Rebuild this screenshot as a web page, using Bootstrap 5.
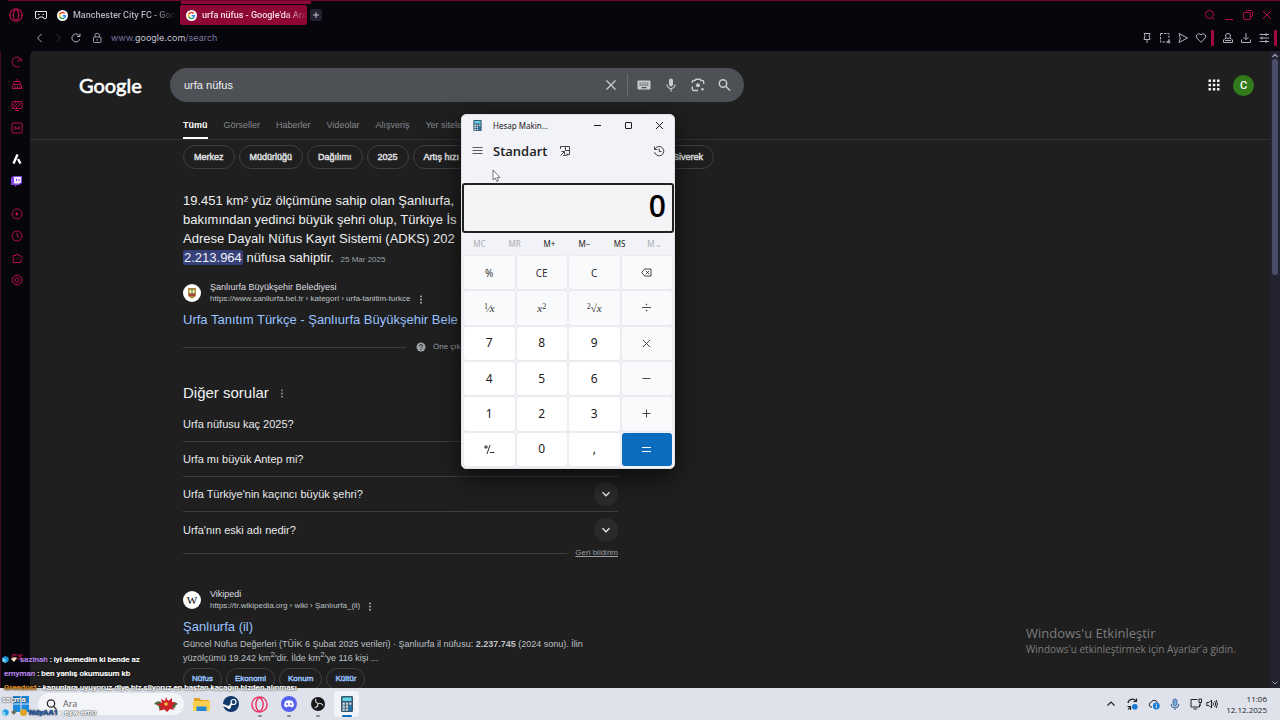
<!DOCTYPE html>
<html lang="tr" data-bs-theme="dark">
<head>
<meta charset="utf-8">
<meta name="viewport" content="width=device-width, initial-scale=1">
<title>urfa nüfus - Google'da Ara</title>
<link href="https://cdn.jsdelivr.net/npm/bootstrap@5.3.0/dist/css/bootstrap.min.css" rel="stylesheet">
<style>
  :root { --gx: #b50f45; --page: #1f1f1f; --rule: #3c3d3f; --link: #99c3ff; --soft: #9aa0a6; }
  body { font-family: "Liberation Sans", Arial, sans-serif; font-size: 9px; line-height: 12px; background: #06060c; color: #e8e8e8; }
  svg { display: block; flex: none; }
  .ln { fill: none; stroke: currentColor; }
  button, input { font: inherit; color: inherit; }
  button { background: none; border: 0; padding: 0; }
  a { color: inherit; text-decoration: none; }

  /* browser chrome */
  .desk { height: 100vh; }
  .topline { height: 5px; border-top: 1px solid #6b0629; margin-left: 8px; }
  .topline div { height: 3px; width: 130px; margin-left: 173px; background: #8e0636; }
  .chrome { font-family: Inter, sans-serif; }
  .tabrow { height: 20px; padding: 0 7px 0 9px; }
  .tab { height: 20px; width: 129px; padding: 0 4px 0 6px; color: #b4b2bd; gap: 5px; }
  .tab span { font: 500 9px/12px Roboto, sans-serif; white-space: nowrap; -webkit-mask-image: linear-gradient(90deg, #000 78%, transparent); mask-image: linear-gradient(90deg, #000 78%, transparent); }
  .tab.on { background: #8e0636; color: #f3dfe6; border-radius: 2px; width: 127px; }
  .plus { width: 12px; height: 12px; background: #24202f; border-radius: 2px; color: #c4c0d0; margin-left: 3px; }
  .gx { color: var(--gx); }
  .addr { height: 26px; padding: 0 3px 1px 35px; color: #b0afbb; }
  .url { font-size: 9px; color: #7d749f; }
  .url b { font-weight: 400; color: #c3c0d0; }
  .pipe { width: 3px; height: 16px; background: #a00a40; border-radius: 1px; }
  .side { width: 30px; color: #b50f45; border-left: 1px solid #3d0a1e; }
  .side div { padding-left: 1px; }
  .side button { height: 22px; width: 29px; display: flex; align-items: center; justify-content: center; }

  /* results page */
  .view { background: var(--page); border-top-left-radius: 5px; }
  .bar { height: 68px; padding: 0 16px 0 49px; }
  .glogo { font-family: Lato, sans-serif; font-weight: 400; font-size: 20px; line-height: 26px; color: #fff; width: 91px; -webkit-text-stroke: .6px #fff; }
  .box { width: 574px; height: 34px; border-radius: 17px; background: #4d5156; padding: 0 13px 0 14px; color: #c9cbce; }
  .box input { background: none; border: 0; outline: 0; padding: 0; font-size: 11px; color: #f0f0f0; }
  .box i { width: 1px; height: 22px; background: #6a6e73; margin: 0 9px 0 10px; }
  .face { width: 21px; height: 21px; background: #337a1c; font: 500 11px/21px Roboto, sans-serif; color: #fff; margin-left: 13px; }
  .tabs { height: 21px; padding-left: 153px; gap: 16px; border-bottom: 1px solid #303134; color: #85888c; }
  .tabs a { height: 20px; line-height: 12px; }
  .tabs a.on { color: #fff; font-weight: 700; border-bottom: 2px solid #fff; }
  .col-res { padding-left: 153px; width: 684px; }
  .chip { height: 24px; border: 1px solid #3c4043; border-radius: 12px; padding: 0 10px; line-height: 22px; -webkit-text-stroke: .4px; white-space: nowrap; color: #e3e4e6; }
  .chips { gap: 4px; margin-top: 5px; }
  .answer { font-size: 13px; line-height: 19px; margin: 22px 0 0; white-space: nowrap; color: #eef0f2; }
  .answer em { font-style: normal; background: #36407a; border-radius: 2px; padding: 0 1px; }
  .answer small { font-size: 8px; color: var(--soft); margin-left: 3px; }
  .src { height: 24px; gap: 9px; white-space: nowrap; color: #dcdde0; }
  .fav { width: 18px; height: 18px; background: #fff; }
  .src p { margin: 0; line-height: 12px; }
  .src .path { font-size: 8px; color: #bdc1c6; }
  .ttl { font-size: 13px; line-height: 18px; color: var(--link); white-space: nowrap; margin-top: 6px; }
  .rule { height: 1px; background: var(--rule); }
  .tiny { font-size: 8px; color: var(--soft); white-space: nowrap; }
  .inner { width: 435px; }
  .ask { height: 35px; font-size: 11px; border-bottom: 1px solid var(--rule); width: 100%; color: #e8e9eb; }
  .ask:last-of-type { border: 0; }
  .dd { width: 24px; height: 24px; background: #282a2b; }
  .snip { line-height: 14px; color: #bdc1c6; margin: 1px 0 0; white-space: nowrap; }
  .snip sup { font-size: 8px; line-height: 0; }
  .blue { margin-top: 3px; }
  .blue .chip { color: var(--link); font-size: 8px; height: 22px; line-height: 20px; padding: 0 8px; }
  .sb { width: 10px; background: #23232f; padding: 2px; color: #9c9eb8; }
  .sb div { width: 6px; height: 216px; background: #4a4d68; border-radius: 3px; }

  /* calculator */
  .calc { left: 461px; top: 114px; width: 214px; height: 355px; background: #f2f3f8; border: 1px solid #dfe1e5; border-radius: 5px; color: #1b1b1b; font-family: "Noto Sans", sans-serif; box-shadow: 0 8px 26px rgba(0,0,0,.65); overflow: hidden; }
  .ctitle { height: 21px; padding: 0 10px 0 11px; font-size: 8px; }
  .chead { height: 47px; padding: 5px 9px 0 10px; color: #333; }
  .chead h1 { font: 600 13px/20px "Open Sans", sans-serif; margin: 0; color: #1b1b1b; }
  .disp { height: 50px; border: 2px solid #222; border-radius: 3px; padding: 0 6px; background: #f4f3f6; }
  .disp output { font: 600 30px/41px "Open Sans", sans-serif; color: #000; }
  .mem { height: 22px; font-size: 8px; padding-right: 2px; }
  .mem button { flex: 1 1 0; }
  .mem button:disabled { color: #a9abb0; }
  .keys { display: grid; grid-template-columns: repeat(4, 1fr); grid-auto-rows: 1fr; gap: 2px; padding: 1px 2px 2px; }
  .keys button { background: #fff; border-radius: 3px; box-shadow: 0 0 0 1px #ebecf0, 0 1px 1px #c9cbd0; font-size: 12px; display: flex; align-items: center; justify-content: center; }
  .keys .fn { background: #f9fafc; font-size: 10px; color: #333; }
  .keys .eq { background: #0b6cbd; color: #fff; box-shadow: none; }
  .keys .math { font-family: "Liberation Serif", serif; font-style: italic; font-size: 11px; }
  .math sup { font-size: 8px; font-style: normal; top: -3px; }
  .ptr { left: 492px; top: 169px; }

  /* desktop */
  .mark-win { left: 1026px; top: 625px; font-family: "Open Sans", sans-serif; color: #7d7d7d; }
  .mark-win p { margin: 0; font-size: 13px; line-height: 17px; }
  .mark-win p + p { font-size: 10px; line-height: 14px; }
  .task { height: 32px; background: #dfe2ea; color: #222; padding-left: 12px; font-family: "Noto Sans", sans-serif; }
  .find { width: 146px; height: 22px; border-radius: 11px; background: #f4f5f9; padding: 0 6px 0 8px; margin-left: 8px; }
  .find input { width: 70px; background: none; border: 0; padding: 0; font-size: 9px; color: #666; margin-left: 6px; }
  .app { width: 25px; height: 26px; position: relative; display: flex; align-items: center; justify-content: center; border-radius: 3px; }
  .run::after { content: ""; position: absolute; bottom: 0; width: 4px; height: 2px; border-radius: 1px; background: #858890; }
  .app.act { background: #f1f3f8; }
  .app.act::after { width: 10px; background: #0b6cbd; }
  .tray { padding-right: 13px; }
  .clock { font: 8px/11px "Open Sans", sans-serif; width: 44px; margin-left: 5px; }

  /* stream chat laid over the lower left corner */
  .chat { left: 2px; top: 653px; font: 500 8px/14px Roboto, sans-serif; color: #fff; white-space: nowrap; -webkit-text-stroke: .2px; text-shadow: 0 0 2px #000, 0 0 1px #000; pointer-events: none; }
  .chat p { margin: 0; }
  .chat svg { display: inline-block; vertical-align: -1px; }
  .gxbadge { left: 11px; top: 652px; font: 700 8px/10px Inter, sans-serif; color: var(--gx); }
</style>
</head>
<body class="overflow-hidden">
<svg width="0" height="0" class="position-absolute">
  <symbol id="g" viewBox="0 0 12 12"><circle cx="6" cy="6" r="6" fill="#fff"/><g fill="none" stroke-width="1.7"><path d="M8.4 3.8A3.3 3.3 0 0 0 3.1 4.4" stroke="#ea4335"/><path d="M3.1 4.4a3.3 3.3 0 0 0 0 3.2" stroke="#fbbc05"/><path d="M3.1 7.6a3.3 3.3 0 0 0 5 .9" stroke="#34a853"/><path d="M8.1 8.5A3.1 3.1 0 0 0 9.2 6.2H6.1" stroke="#4285f4"/></g></symbol>
  <symbol id="dots" viewBox="0 0 4 10"><g fill="currentColor"><circle cx="2" cy="1.5" r="1"/><circle cx="2" cy="5" r="1"/><circle cx="2" cy="8.5" r="1"/></g></symbol>
  <symbol id="down" viewBox="0 0 10 10"><path d="M1.5 3.3 5 6.8l3.500-3.500" fill="none" stroke="currentColor" stroke-width="1.3"/></symbol>
  <symbol id="calcapp" viewBox="0 0 12 16"><rect width="12" height="16" rx="1.200" fill="#38566b"/><rect x="1.500" y="1.500" width="9" height="3.500" fill="#5fd6e8"/><g fill="#c8dbe6"><path d="M1.500 6.500h2.300v2.200H1.500zM4.800 6.500h2.300v2.200H4.800zM8.200 6.500h2.300v2.200H8.200zM1.500 9.600h2.300v2.200H1.500zM4.800 9.600h2.300v2.200H4.800zM1.500 12.600h2.300v2.200H1.500zM4.800 12.600h2.300v2.200H4.800z"/></g><path d="M8.200 9.600h2.300v5.200H8.200z" fill="#1b7fc4"/></symbol>
  <symbol id="cube" viewBox="0 0 8 8"><path d="m4 0 3.500 2v4L4 8 .5 6V2z" fill="#1f9be0"/><path d="M4 4v4L.5 6V2z" fill="#7fd4f7"/></symbol>
</svg>

<div class="desk d-flex flex-column">
  <header class="chrome">
    <div class="topline"><div></div></div>
    <div class="tabrow d-flex align-items-center">
      <button class="gx" aria-label="Opera GX"><svg width="14" height="14" viewBox="0 0 14 14" class="ln" stroke-width="1.300"><circle cx="7" cy="7" r="6.200"/><ellipse cx="7" cy="7" rx="2.700" ry="5.200"/></svg></button>
      <button class="ps-2 ms-1 me-1" aria-label="Çalışma alanı"><svg width="12" height="12" viewBox="0 0 12 12" class="ln" stroke="#a9a8b4"><path d="M.5 2.500h11v6.500L9.500 10 8 8H4.500L3 10 .5 9zM3 5.500h1.500M7.500 5.500H9"/></svg></button>
      <a class="tab d-flex align-items-center" href="#"><svg width="11" height="11"><use href="#g"/></svg><span>Manchester City FC - Goo</span></a>
      <a class="tab on d-flex align-items-center" href="#"><svg width="11" height="11"><use href="#g"/></svg><span>urfa nüfus - Google'da Ara</span></a>
      <button class="plus d-flex align-items-center justify-content-center" aria-label="Yeni sekme"><svg width="8" height="8" viewBox="0 0 8 8" class="ln"><path d="M4 1v6M1 4h6"/></svg></button>
      <div class="ms-auto d-flex gx" style="gap:7px">
        <svg width="12" height="12" viewBox="0 0 12 12" class="ln"><circle cx="5.500" cy="5.500" r="4"/><path d="m8.500 8.500 2 2"/></svg>
        <svg width="12" height="12" viewBox="0 0 12 12" class="ln"><path d="M2 10.500h8"/></svg>
        <svg width="12" height="12" viewBox="0 0 12 12" class="ln"><rect x="1.500" y="3.500" width="7" height="7" rx="1.500"/><path d="M3.500 3.500V3L5 1.500h4.500l1 1V7L9 8.500"/></svg>
        <svg width="12" height="12" viewBox="0 0 12 12" class="ln"><path d="m2 2 8 8M10 2l-8 8"/></svg>
      </div>
    </div>
    <div class="addr d-flex align-items-center">
      <svg width="10" height="10" viewBox="0 0 10 10" class="ln"><path d="M6.500 1 2.500 5l4 4"/></svg>
      <svg width="10" height="10" viewBox="0 0 10 10" class="ln ms-2 opacity-25"><path d="m3.500 1 4 4-4 4"/></svg>
      <svg width="10" height="10" viewBox="0 0 10 10" class="ln ms-2"><path d="M8.700 6.200A4 4 0 1 1 8.400 3M9 .5v3H6"/></svg>
      <svg width="10" height="10" viewBox="0 0 10 10" class="ln" stroke-width=".9" style="margin:0 9px 0 11px"><rect x="1.500" y="4" width="7.500" height="5.500" rx="1"/><path d="M3 4V2.500a2.200 2.200 0 0 1 4.500 0V4M5.200 6v1.800"/></svg>
      <a class="url" href="#">www.<b>google.com</b>/search</a>
      <div class="ms-auto d-flex align-items-center" style="gap:6px">
        <svg width="12" height="12" viewBox="0 0 12 12" class="ln"><path d="M3 1.500h6L8 3.500l1 4H3l1-4zM6 7.500v3.500"/></svg>
        <svg width="12" height="12" viewBox="0 0 12 12" class="ln"><path d="M1.500 1.500h8.500v8.500H1.500z" stroke-dasharray="2.500 1"/><path d="M8 10h3.500M10 8v3.500"/></svg>
        <svg width="12" height="12" viewBox="0 0 12 12" class="ln"><path d="m2 1.500 8.500 4.500L2 10.500 3.200 6z"/></svg>
        <svg width="12" height="12" viewBox="0 0 12 12" class="ln"><path d="M6 10.300 1.800 6A2.600 2.600 0 0 1 6 2.900 2.600 2.600 0 0 1 10.200 6z"/></svg>
      </div>
      <div class="d-flex align-items-center" style="gap:6px;margin-left:4px"><span class="pipe"></span>
        <svg style="margin-left:2px" width="12" height="12" viewBox="0 0 12 12" class="ln"><circle cx="6" cy="4" r="2.500"/><path d="M4 6.500H3L1.500 8v2.500h9V8L9 6.500H8M3 8.500h6"/></svg>
        <svg width="12" height="12" viewBox="0 0 12 12" class="ln"><path d="M6 1v6.500M3.500 5.200 6 7.700l2.500-2.500M1.500 7.500v3h9v-3"/></svg>
        <svg width="12" height="12" viewBox="0 0 12 12" class="ln"><path d="M1.500 2.500H11M1.500 6H11M1.500 9.500H11M8 1v3M4 4.500v3M8 8v3"/></svg>
      </div>
      <span class="pipe ms-1"></span>
    </div>
  </header>

  <div class="d-flex flex-grow-1 overflow-hidden">
    <nav class="side flex-shrink-0">
      <div>
      <button aria-label="GX Control"><svg width="12" height="12" viewBox="0 0 12 12" class="ln"><path d="M8.700 10.300A5 5 0 1 1 8.500 1.700M6 6l4-3M7.500 3h3v2.500"/></svg></button>
      <button aria-label="GX Cleaner"><svg width="12" height="12" viewBox="0 0 12 12" class="ln"><path d="M6 1v2.500M3 3.500h6v3H3zM2 6.500h8l1 4H1zM4 8v2.500M6.500 8v2.500M9 8v2.500"/></svg></button>
      <button aria-label="Mods"><svg width="12" height="12" viewBox="0 0 12 12" class="ln"><rect x="1" y="1.500" width="10" height="7" rx="1"/><path d="M2 8 8 2M5 8l5-5M2 5l3-3M4 10.500h4"/></svg></button>
      <button aria-label="GX Corner"><svg width="12" height="12" viewBox="0 0 12 12" class="ln"><rect x="1" y="1" width="10" height="10" rx="1"/><path d="M4 8V4.500L6 7l2-2.500V8"/></svg></button>
      </div>
      <div style="padding-top:9px">
      <button aria-label="Aria"><svg width="10" height="10" viewBox="0 0 10 10" fill="none" stroke="#fff" stroke-width="2.400"><path d="M5.500.5 1.500 9.500M6 5l2.500 4.500"/></svg></button>
      <button aria-label="Twitch"><svg width="11" height="11" viewBox="0 0 11 11"><path d="M2 0h9v7L8 9H6l-2 2V9H0V2z" fill="#8146e0"/><path d="M3 1h7v5L8.500 7.500H3z" fill="#f4eaff"/><path d="M5.500 2.800v2.400M8 2.800v2.400" stroke="#8146e0" stroke-width="1"/></svg></button>
      </div>
      <div style="padding-top:11px">
      <button aria-label="Oynatıcı"><svg width="12" height="12" viewBox="0 0 12 12" class="ln"><circle cx="6" cy="6" r="5"/><path d="M5.200 4.500v3l2-1.500z" fill="currentColor"/></svg></button>
      <button aria-label="Geçmiş"><svg width="12" height="12" viewBox="0 0 12 12" class="ln"><circle cx="6" cy="6" r="5"/><path d="M6 2.800V6l2.200 1.200"/></svg></button>
      <button aria-label="Uzantılar"><svg width="12" height="12" viewBox="0 0 12 12" class="ln"><path d="M2 3.500h2.500a1.500 1.500 0 1 1 3 0L10 4l.5 1.500 1 1-1 1-1 3H2V8l1.300-1L2 5.800z"/></svg></button>
      <button aria-label="Ayarlar"><svg width="12" height="12" viewBox="0 0 12 12" class="ln"><path d="m4 1.300 2 .2 2-.2 1 1.600 1.800 1.200L10.500 6l.3 2L9 9.100l-1 1.600-2-.2-2 .2-1-1.600L1.200 8l.3-2-.3-2L3 2.900z"/><circle cx="6" cy="6" r="2.100"/></svg></button>
      </div>
    </nav>

    <main class="view flex-grow-1 overflow-hidden">
      <div class="bar d-flex align-items-center">
        <a class="glogo" href="#">Google</a>
        <form class="box d-flex align-items-center">
          <input class="flex-grow-1" type="text" value="urfa nüfus" aria-label="Ara">
          <svg class="ln" width="12" height="12" viewBox="0 0 12 12" stroke-width="1.300"><path d="m1.500 1.500 9 9M10.500 1.500l-9 9"/></svg>
          <i></i>
          <svg width="14" height="14" viewBox="0 0 14 14" fill="currentColor"><path d="M1.500 2.500h11q1 0 1 1v7q0 1-1 1h-11q-1 0-1-1v-7q0-1 1-1z"/><path d="M2.500 5h9M2.500 7.200h9" stroke="#4d5156" stroke-width="1.200" stroke-dasharray="1.200 .7"/><path d="M4.500 9.600h5" stroke="#4d5156" stroke-width="1.100"/></svg>
          <svg style="margin-left:13px" width="14" height="14" viewBox="0 0 14 14"><rect x="5" y=".5" width="4" height="8" rx="2" fill="currentColor"/><path d="M3 6.500a4 4 0 0 0 8 0M7 10.500v3" class="ln" stroke-width="1.200"/></svg>
          <svg style="margin-left:13px" width="14" height="14" viewBox="0 0 14 14" class="ln" stroke-width="1.400"><path d="M1.300 5V3.800q0-1.300 1.300-1.300H4l1-1.300h4l1 1.300h1.400q1.300 0 1.300 1.300V6M1.300 8.500v2.200q0 1.800 1.800 1.800H7"/><circle cx="7" cy="7.200" r="2" fill="currentColor" stroke="none"/><circle cx="11.500" cy="11.300" r="1.200" fill="currentColor" stroke="none"/></svg>
          <svg style="margin-left:13px" width="13" height="14" viewBox="0 0 13 14" class="ln" stroke-width="1.500"><circle cx="5" cy="5.500" r="3.700"/><path d="m7.800 8.300 4.200 4.200"/></svg>
        </form>
        <svg class="ms-auto" width="12" height="12" viewBox="0 0 12 12" fill="#f1f1f1"><path d="M.5.5h2.500v2.500H.5zM4.800.5h2.500v2.500H4.800zM9 .5h2.500v2.500H9zM.5 4.800h2.500v2.500H.5zM4.800 4.800h2.500v2.500H4.800zM9 4.800h2.500v2.500H9zM.5 9h2.500v2.500H.5zM4.800 9h2.500v2.500H4.800zM9 9h2.500v2.500H9z"/></svg>
        <button class="face rounded-circle">C</button>
      </div>
      <nav class="tabs d-flex">
        <a class="on" href="#">Tümü</a><a href="#">Görseller</a><a href="#">Haberler</a><a href="#">Videolar</a><a href="#">Alışveriş</a><a href="#">Yer siteleri</a>
      </nav>
      <div class="col-res">
        <div class="chips d-flex">
          <a class="chip" href="#">Merkez</a><a class="chip" href="#">Müdürlüğü</a><a class="chip" href="#">Dağılımı</a><a class="chip" href="#">2025</a><a class="chip" href="#">Artış hızı</a><a class="chip ms-auto" href="#">Siverek</a>
        </div>
        <p class="answer">19.451 km² yüz ölçümüne sahip olan Şanlıurfa,<br>bakımından yedinci büyük şehri olup, Türkiye İs<br>Adrese Dayalı Nüfus Kayıt Sistemi (ADKS) 202<br><em>2.213.964</em> nüfusa sahiptir. <small>25 Mar 2025</small></p>
        <div class="inner">
          <div class="src d-flex align-items-center" style="margin-top:12px">
            <span class="fav rounded-circle d-flex align-items-center justify-content-center"><svg width="10" height="12" viewBox="0 0 10 12"><path d="M1 1h8v7q0 2-4 3.500Q1 10 1 8z" fill="#a88b3c"/><path d="M2.500 3h5v3h-5z" fill="#fff3c4"/><path d="M2 7h6v2H2z" fill="#b33b32"/><path d="M5 2v6" stroke="#387a45"/></svg></span>
            <div><p>Şanlıurfa Büyükşehir Belediyesi</p><p class="path d-flex align-items-center">https://www.sanliurfa.bel.tr › kategori › urfa-tanitim-turkce <svg class="ms-2" width="4" height="9"><use href="#dots"/></svg></p></div>
          </div>
          <a class="ttl d-block" href="#">Urfa Tanıtım Türkçe - Şanlıurfa Büyükşehir Bele</a>
          <div class="d-flex align-items-center" style="margin-top:12px">
            <span class="rule" style="width:223px"></span>
            <svg style="margin:0 7px 0 10px" width="10" height="10" viewBox="0 0 10 10"><circle cx="5" cy="5" r="4.500" fill="#9aa0a6"/><path d="M3.600 4a1.400 1.400 0 1 1 2 1.200Q5 5.500 5 6.200M5 7v1" fill="none" stroke="#1f1f1f"/></svg>
            <a class="tiny" href="#">Öne çıkan</a>
          </div>
          <div class="d-flex align-items-center" style="margin-top:30px;height:20px;font-size:15px;color:#eef0f2">Diğer sorular<svg style="margin-left:11px;color:#9aa0a6" width="4" height="9"><use href="#dots"/></svg></div>
          <div style="margin-top:4px">
          <button class="ask d-flex align-items-center justify-content-between">Urfa nüfusu kaç 2025?<span class="dd rounded-circle d-flex align-items-center justify-content-center"><svg width="10" height="10"><use href="#down"/></svg></span></button>
          <button class="ask d-flex align-items-center justify-content-between">Urfa mı büyük Antep mi?<span class="dd rounded-circle d-flex align-items-center justify-content-center"><svg width="10" height="10"><use href="#down"/></svg></span></button>
          <button class="ask d-flex align-items-center justify-content-between">Urfa Türkiye'nin kaçıncı büyük şehri?<span class="dd rounded-circle d-flex align-items-center justify-content-center"><svg width="10" height="10"><use href="#down"/></svg></span></button>
          <button class="ask d-flex align-items-center justify-content-between">Urfa'nın eski adı nedir?<span class="dd rounded-circle d-flex align-items-center justify-content-center"><svg width="10" height="10"><use href="#down"/></svg></span></button>
          </div>
          <div class="d-flex align-items-center"><span class="rule flex-grow-1 me-2"></span><a class="tiny text-decoration-underline" href="#">Geri bildirim</a></div>
          <div class="src d-flex align-items-center" style="margin-top:29px">
            <span class="fav rounded-circle text-center text-black" style="font:11px/18px 'Liberation Serif',serif">W</span>
            <div><p>Vikipedi</p><p class="path d-flex align-items-center">https://tr.wikipedia.org › wiki › Şanlıurfa_(il) <svg class="ms-2" width="4" height="9"><use href="#dots"/></svg></p></div>
          </div>
          <a class="ttl d-block" href="#">Şanlıurfa (il)</a>
          <p class="snip">Güncel Nüfus Değerleri (TÜİK 6 Şubat 2025 verileri) · Şanlıurfa il nüfusu: <b>2.237.745</b> (2024 sonu). İlin<br>yüzölçümü 19.242 km<sup>2</sup>'dir. İlde km<sup>2</sup>'ye 116 kişi ...</p>
          <div class="chips blue d-flex"><a class="chip" href="#">Nüfus</a><a class="chip" href="#">Ekonomi</a><a class="chip" href="#">Konum</a><a class="chip" href="#">Kültür</a></div>
        </div>
      </div>
    </main>
    <div class="sb d-flex flex-column align-items-center flex-shrink-0">
      <svg width="6" height="6" viewBox="0 0 6 6" class="ln" stroke-width="1.300"><path d="m.5 4 2.500-2.500L5.500 4"/></svg>
      <div></div>
      <svg class="ln mt-auto" width="6" height="6" viewBox="0 0 6 6"><path d="M.5 1.500 3 4l2.500-2.500"/></svg>
    </div>
  </div>

  <footer class="task d-flex align-items-center flex-shrink-0">
    <button aria-label="Başlat"><svg width="18" height="18" viewBox="0 0 18 18" fill="#1b8be0"><path d="M1 1h7.500v7.500H1zM9.500 1H17v7.500H9.500zM1 9.500h7.500V17H1zM9.500 9.500H17V17H9.500z"/></svg></button>
    <div class="find d-flex align-items-center">
      <svg width="11" height="11" viewBox="0 0 11 11" class="ln" stroke-width="1.200"><circle cx="5" cy="4.500" r="3.700"/><path d="m7.500 7.300 3 3"/></svg>
      <input type="text" value="Ara" aria-label="Ara">
      <svg class="ms-auto" width="24" height="15" viewBox="0 0 24 15"><path d="M0 7q4-5 8-1l8 1q4-4 8 0-3 1-3 4-5 1-8-1-4 5-8 2 1-4-5-5z" fill="#4b6b33"/><path d="m12 0 2 4 4-3 0 4 4 1-4 3 2 4-4-1-3 3-3-3-5 2 2-4-4-3 5-1-1-4 4 2z" fill="#d0202c"/><circle cx="12" cy="7" r="1.800" fill="#f3c03a"/></svg>
    </div>
    <div class="d-flex" style="gap:4px;margin-left:5px">
      <button class="app" aria-label="Dosya Gezgini"><svg width="17" height="15" viewBox="0 0 17 15"><path d="M1 1h5.500L8 3h8v4H1z" fill="#e3a21d"/><path d="M0 4h17v10H0z" fill="#fbd04e"/><path d="M3.500 9.500h10V14h-10z" fill="#2386d1"/></svg></button>
      <button class="app" aria-label="Steam"><svg width="16" height="16" viewBox="0 0 16 16"><circle cx="8" cy="8" r="8" fill="#12396b"/><path d="m0 9 6 2.500 3-4.500" fill="none" stroke="#fff" stroke-width="2"/><circle cx="10.500" cy="6" r="2.500" fill="#12396b" stroke="#fff" stroke-width="1.200"/><circle cx="6" cy="11.300" r="1.800" fill="#fff"/></svg></button>
      <button class="app run" aria-label="Opera GX"><svg width="17" height="17" viewBox="0 0 17 17" fill="none" stroke="#ee2d62" stroke-width="1.400"><circle cx="8.500" cy="8.500" r="7.600"/><ellipse cx="8.500" cy="8.500" rx="3.600" ry="6.600"/></svg></button>
      <button class="app run" aria-label="Discord"><svg width="16" height="16" viewBox="0 0 16 16"><circle cx="8" cy="8" r="8" fill="#5662ee"/><path d="M4.500 5q3.500-1.500 7 0 1.500 2.500 1.300 5.200-1.200 1-2.600 1.200l-.6-1H6.400l-.6 1q-1.400-.2-2.600-1.200Q3 7.500 4.500 5z" fill="#fff"/><circle cx="6.200" cy="8" r="1" fill="#5662ee"/><circle cx="9.800" cy="8" r="1" fill="#5662ee"/></svg></button>
      <button class="app run" aria-label="OBS"><svg width="14" height="14" viewBox="0 0 14 14"><circle cx="7" cy="7" r="7" fill="#17171a"/><g fill="none" stroke="#d9d9d9" stroke-width="1.200"><path d="M7 6.500Q3.500 5 5 2M7 6.500q3.500-1 5 2M7 6.500Q7 10.500 3.500 10.500"/></g></svg></button>
      <button class="app run act" aria-label="Hesap Makinesi"><svg width="12" height="16"><use href="#calcapp"/></svg></button>
    </div>
    <div class="tray ms-auto d-flex align-items-center">
      <svg width="8" height="8" viewBox="0 0 8 8" class="ln" stroke-width="1.200"><path d="m.5 5.500 3.500-3.500 3.500 3.500"/></svg>
      <svg style="margin-left:11px" width="13" height="13" viewBox="0 0 13 13" class="ln" stroke-width="1.200"><path d="M2 5a4.500 4.500 0 0 1 8-2M10.500.5v3h-3M2 11.500l2-2.500M1.500 8.500h3V12"/><circle cx="8.800" cy="8.800" r="2.800" fill="#1579d0" stroke="none"/></svg>
      <svg style="margin-left:9px" width="13" height="13" viewBox="0 0 13 13" class="ln" stroke="#555"><path d="M4 9H3a2.300 2.300 0 0 1 0-4.500 3.500 3.500 0 0 1 6.500 0"/><circle cx="8.300" cy="8" r="3.400" fill="#1579d0" stroke="none"/><path d="M8.300 7.500V10M8.300 5.800v1" stroke="#fff"/></svg>
      <svg style="margin-left:9px" width="10" height="13" viewBox="0 0 10 13"><rect x="3" y="1" width="4" height="7" rx="2" fill="#7ca6d8" stroke="#35629c" stroke-width=".8"/><path d="M1 6a4 4 0 0 0 8 0M5 10v2" fill="none" stroke="#35629c"/></svg>
      <svg style="margin-left:10px" width="12" height="12" viewBox="0 0 12 12" class="ln"><path d="M7.500 1.500H1v7.500h8.500V6.500M3.500 11H7M9 1h2.500v3.500H9zM10.200 4.500V8"/></svg>
      <svg class="ms-1" width="12" height="12" viewBox="0 0 12 12" class="ln" fill="none" stroke="currentColor"><path d="M.8 4.500H3L5.500 2v8L3 7.500H.8zM7 4.500q1 1.500 0 3M8.700 3.200q2 2.800 0 5.600M10.200 2q2.500 4 0 8"/></svg>
      <div class="clock text-end">11:06<br>12.12.2025</div>
    </div>
  </footer>
</div>

<div class="mark-win position-absolute"><p>Windows'u Etkinleştir</p><p>Windows'u etkinleştirmek için Ayarlar'a gidin.</p></div>

<section class="calc position-absolute d-flex flex-column" aria-label="Hesap Makinesi">
  <div class="ctitle d-flex align-items-center flex-shrink-0">
    <svg width="9" height="11"><use href="#calcapp"/></svg><span style="margin-left:11px">Hesap Makin...</span>
    <div class="ms-auto d-flex" style="gap:22px">
      <svg width="9" height="9" viewBox="0 0 9 9" class="ln"><path d="M1 4.500h7"/></svg>
      <svg width="9" height="9" viewBox="0 0 9 9" class="ln"><rect x="1.500" y="1.500" width="6" height="6" rx=".5"/></svg>
      <svg width="9" height="9" viewBox="0 0 9 9" class="ln"><path d="m1 1 7 7M8 1 1 8"/></svg>
    </div>
  </div>
  <div class="chead d-flex align-items-start flex-shrink-0">
    <button aria-label="Menü" class="mt-1"><svg width="11" height="11" viewBox="0 0 11 11" class="ln" stroke-width=".8"><path d="M.5 2.500h10M.5 5.500h10M.5 8.500h10"/></svg></button>
    <h1 style="margin-left:10px">Standart</h1>
    <button aria-label="Üstte tut" class="mt-1" style="margin-left:12px"><svg width="12" height="12" viewBox="0 0 12 12" class="ln" stroke-width=".9"><path d="M1.500 4V1.500h9v8H8M6.500 1.500v4h4M1.500 10.500l4-4M2.500 6.500h3v3M4 10.500h4v-2"/></svg></button>
    <button aria-label="Geçmiş" class="ms-auto mt-1"><svg width="12" height="12" viewBox="0 0 12 12" class="ln" stroke-width=".9"><path d="M1.500 1.500v3h3M1.800 4.300A4.700 4.700 0 1 1 1.500 7M6.200 3.500v3h2.300"/></svg></button>
  </div>
  <div class="disp d-flex justify-content-end flex-shrink-0"><output>0</output></div>
  <div class="mem d-flex flex-shrink-0"><button disabled>MC</button><button disabled>MR</button><button>M+</button><button>M−</button><button>MS</button><button disabled>M⌄</button></div>
  <div class="keys flex-grow-1">
    <button class="fn">%</button><button class="fn">CE</button><button class="fn">C</button><button class="fn" aria-label="Geri al"><svg width="11" height="9" viewBox="0 0 11 9" class="ln" stroke-width=".9"><path d="M3.500 1H10v7H3.500L.8 4.500zM5 3l3 3M8 3 5 6"/></svg></button>
    <button class="fn math"><span><sup>1</sup>⁄x</span></button><button class="fn math"><span>x<sup>2</sup></span></button><button class="fn math" aria-label="Karekök"><span><sup>2</sup>√x</span></button><button class="fn" aria-label="Böl"><svg width="11" height="11" viewBox="0 0 11 11" class="ln" stroke-width=".9"><path d="M1 5.500h9"/><circle cx="5.500" cy="2.500" r=".4"/><circle cx="5.500" cy="8.500" r=".4"/></svg></button>
    <button>7</button><button>8</button><button>9</button><button class="fn" aria-label="Çarp"><svg width="9" height="9" viewBox="0 0 9 9" class="ln" stroke-width=".9"><path d="m1 1 7 7M8 1 1 8"/></svg></button>
    <button>4</button><button>5</button><button>6</button><button class="fn" aria-label="Çıkar"><svg width="9" height="9" viewBox="0 0 9 9" class="ln" stroke-width=".9"><path d="M.5 4.500h8"/></svg></button>
    <button>1</button><button>2</button><button>3</button><button class="fn" aria-label="Topla"><svg width="9" height="9" viewBox="0 0 9 9" class="ln" stroke-width=".9"><path d="M.5 4.500h8M4.500.5v8"/></svg></button>
    <button aria-label="İşaret"><svg width="12" height="11" viewBox="0 0 12 11" class="ln" stroke-width=".9"><path d="M1 3h4M3 1v4M7 1 4 10M7 8.500h4.500"/></svg></button><button>0</button><button>,</button><button class="eq" aria-label="Eşittir"><svg width="11" height="9" viewBox="0 0 11 9" class="ln"><path d="M1 2.500h9M1 6.500h9"/></svg></button>
  </div>
</section>
<svg class="ptr position-absolute" width="9" height="14" viewBox="0 0 9 14"><path d="M1 1v10l2.300-2 1.500 3.500 1.600-.7-1.400-3.300H8z" fill="#fff" stroke="#555" stroke-width=".8"/></svg>

<div class="gxbadge position-absolute">GX</div>
<div class="chat position-absolute">
  <p><svg width="7" height="7"><use href="#cube"/></svg> <svg width="7" height="7" viewBox="0 0 7 7"><path d="M0 3q3-3 6-1L3 6z" fill="#e9e3c4"/></svg> <span style="color:#b887e8">sazinah</span> : iyi demedim ki bende az</p>
  <p style="padding-left:2px"><span style="color:#b887e8">ernyman</span> : ben yanlış okumusum kb</p>
  <p style="padding-left:2px"><span style="color:#d98a1c">Greedost</span> : kanunlara uyuyoruz diye biz sliyoruz en baştan kaçağın bizden alınması</p>
  <p style="line-height:10px">saçma</p>
  <p style="line-height:16px"><svg width="7" height="7"><use href="#cube"/></svg> <svg width="7" height="7" viewBox="0 0 7 7"><path d="M0 3q3-3 6-1L3 6z" fill="#66705c"/></svg> <svg width="7" height="7" viewBox="0 0 7 7"><circle cx="3.500" cy="3.500" r="3.500" fill="#e0a32c"/></svg> <span style="color:#2b62b5">NdyAA1</span> : eyw emo</p>
</div>
<script src="https://cdn.jsdelivr.net/npm/bootstrap@5.3.0/dist/js/bootstrap.bundle.min.js"></script>
</body>
</html>
